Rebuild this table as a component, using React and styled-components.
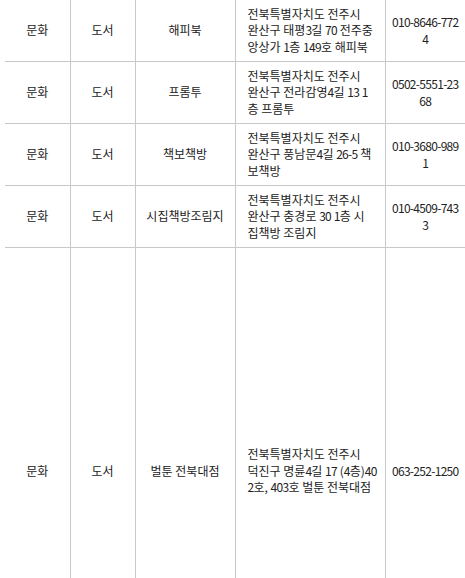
import React from 'react';
import styled, { createGlobalStyle } from 'styled-components';

const GlobalStyle = createGlobalStyle`
  html, body {
    margin: 0;
    padding: 0;
    background: #fff;
  }
  body {
    font-family: "Noto Sans CJK KR", "Noto Sans", sans-serif;
    color: #222;
  }
`;

const Wrap = styled.div`
  padding-left: 5px;
  margin-top: -1px;
`;

const Table = styled.table`
  width: 460px;
  border-collapse: collapse;
  table-layout: fixed;
  font-size: 12px;
  line-height: 16.5px;
`;

const Col = styled.col`
  width: ${p => p.$w}px;
`;

const Row = styled.tr`
  height: ${p => p.$tall ? '447px' : '62px'};
  border-top: 1px solid #c8c8c8;
  border-bottom: 1px solid #c8c8c8;
`;

const Cell = styled.td`
  padding: 0 ${p => p.$pad || 4}px;
  text-align: ${p => p.$left ? 'left' : 'center'};
  vertical-align: middle;
  border-left: 1px solid #c8c8c8;

  &:first-child {
    border-left: none;
  }
`;

const Line = styled.span`
  display: block;
  white-space: nowrap;
`;

// digits in the original font are narrower than Noto's
const Num = styled.span`
  letter-spacing: -0.7px;
`;

const withNums = text =>
  text.split(/([\d-]+)/).map((part, i) =>
    /^[\d-]+$/.test(part) ? <Num key={i}>{part}</Num> : part
  );

const stores = [
  {
    name: '해피북',
    addr: ['전북특별자치도 전주시', '완산구 태평3길 70 전주중', '앙상가 1층 149호 해피북'],
    tel: ['010-8646-772', '4'],
  },
  {
    name: '프롬투',
    addr: ['전북특별자치도 전주시', '완산구 전라감영4길 13 1', '층 프롬투'],
    tel: ['0502-5551-23', '68'],
  },
  {
    name: '책보책방',
    addr: ['전북특별자치도 전주시', '완산구 풍남문4길 26-5 책', '보책방'],
    tel: ['010-3680-989', '1'],
  },
  {
    name: '시집책방조림지',
    addr: ['전북특별자치도 전주시', '완산구 충경로 30 1층 시', '집책방 조림지'],
    tel: ['010-4509-743', '3'],
  },
  {
    name: '벌툰 전북대점',
    addr: ['전북특별자치도 전주시', '덕진구 명륜4길 17 (4층)40', '2호, 403호 벌툰 전북대점'],
    tel: ['063-252-1250'],
    tall: true,
  },
];

export default function App() {
  return (
    <Wrap>
      <GlobalStyle />
      <Table>
        <colgroup>
          <Col $w={65} />
          <Col $w={65} />
          <Col $w={100} />
          <Col $w={150} />
          <Col $w={80} />
        </colgroup>
        <tbody>
          {stores.map(s => (
            <Row key={s.name} $tall={s.tall}>
              <Cell>문화</Cell>
              <Cell>도서</Cell>
              <Cell>{s.name}</Cell>
              <Cell $left $pad={12}>
                {s.addr.map(l => <Line key={l}>{withNums(l)}</Line>)}
              </Cell>
              <Cell $pad={4}>
                {s.tel.map(l => <Line key={l}>{withNums(l)}</Line>)}
              </Cell>
            </Row>
          ))}
        </tbody>
      </Table>
    </Wrap>
  );
}
